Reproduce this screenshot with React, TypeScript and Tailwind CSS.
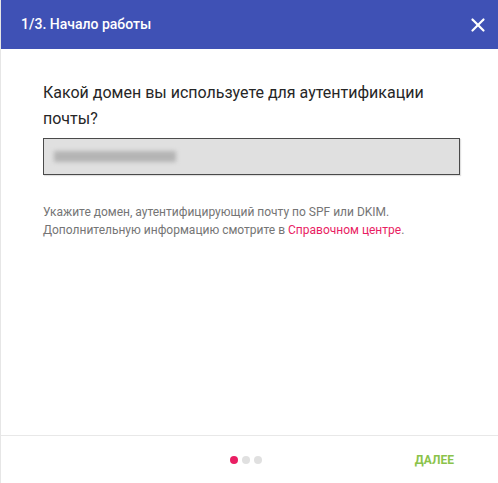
import { X } from "lucide-react";

const font = { fontFamily: "Roboto, 'Noto Sans', sans-serif" };

function StepDots({ active, total }: { active: number; total: number }) {
  return (
    <div className="flex items-center gap-1">
      {Array.from({ length: total }).map((_, i) => (
        <span
          key={i}
          className={
            i === active
              ? "h-2 w-2 rounded-full bg-[#e91e63]"
              : "h-2 w-2 rounded-full bg-[#e0e0e0]"
          }
        />
      ))}
    </div>
  );
}

export default function App() {
  return (
    <div
      className="flex h-[483px] w-[498px] flex-col overflow-hidden border-l border-[#e6e6e6] bg-white"
      style={font}
    >
      <header className="flex h-[49px] shrink-0 items-center justify-between bg-[#3f51b5] pl-5 pr-[6px]">
        <h1 className="text-[14px] font-medium text-white">1/3. Начало работы</h1>
        <button className="flex h-[28px] w-[28px] items-center justify-center text-white">
          <X size={22} strokeWidth={2.4} />
        </button>
      </header>

      <main className="flex-1 pl-[42px] pr-[38px] pt-[31px]">
        <p className="text-[16px] leading-[26px] text-[#262626]">
          Какой домен вы используете для аутентификации почты?
        </p>
        <div className="mt-[6px] flex h-[37px] items-center border border-[#4a4a4a] bg-[#e0e0e0] pl-[10px] shadow-[1px_1px_1px_rgba(0,0,0,0.12)]">
          <div className="h-[11px] w-[122px] bg-[#b4b4b4] blur-[2px]" />
        </div>
        <p className="mt-[28px] text-[12px] leading-[18px] text-[#757575]">
          Укажите домен, аутентифицирующий почту по SPF или DKIM.
          <br />
          Дополнительную информацию смотрите в{" "}
          <a className="text-[#e91e63]">Справочном центре</a>.
        </p>
      </main>

      <footer className="flex h-[48px] shrink-0 items-center border-t border-[#e8e8e8] pl-[28px] pr-[36px]">
        <div className="flex-1" />
        <StepDots active={0} total={3} />
        <div className="flex flex-1 justify-end">
          <button className="px-2 text-[12px] font-bold text-[#8bc34a]">ДАЛЕЕ</button>
        </div>
      </footer>
    </div>
  );
}
